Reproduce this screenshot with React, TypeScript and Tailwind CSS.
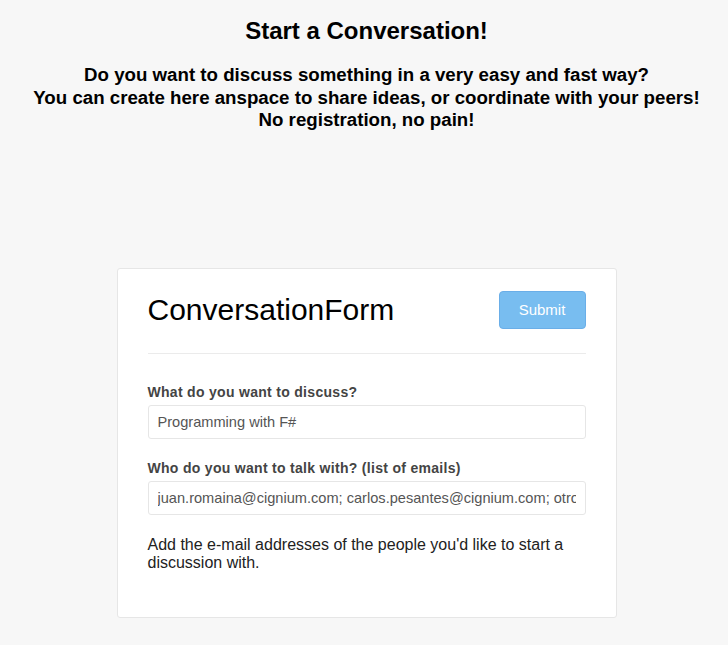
export default function App() {
  return (
    <div
      className="min-h-[645px] bg-[#f7f7f7] pl-[5px] text-black"
      style={{ fontFamily: '"Liberation Sans", Arial, sans-serif' }}
    >
      <div className="pt-[17px] text-center">
        <h2 className="text-[24px] font-bold leading-[28px]">Start a Conversation!</h2>
        <div className="mt-[19px] text-[18.7px] font-bold leading-[22.5px]">
          <p>Do you want to discuss something in a very easy and fast way?</p>
          <p>You can create here anspace to share ideas, or coordinate with your peers!</p>
          <p>No registration, no pain!</p>
        </div>
      </div>

      <div className="mx-auto mt-[136px] w-[500px] rounded-[3px] border border-[#e6e6e6] bg-white px-[30px] pb-[45px] pt-[22px]">
        <div className="flex h-[38px] items-center justify-between">
          <h1 className="text-[30px] font-normal leading-[38px]">ConversationForm</h1>
          <button className="h-[38px] w-[87px] rounded-[4px] border border-[#6aaee8] bg-[#78bdf0] pt-[2px] text-[15px] text-white">
            Submit
          </button>
        </div>
        <div className="mt-[24px] border-t border-[#ebebeb]" />

        <label className="mt-[29px] block text-[14px] font-bold leading-[18px] tracking-[0.3px] text-[#444]">
          What do you want to discuss?
        </label>
        <input
          readOnly
          value="Programming with F#"
          className="mt-[4px] block h-[34px] w-full rounded-[3px] border border-[#e6e6e6] px-[9px] text-[14.6px] text-[#555] outline-none"
        />

        <label className="mt-[20px] block text-[14px] font-bold leading-[18px] tracking-[0.3px] text-[#444]">
          Who do you want to talk with? (list of emails)
        </label>
        <input
          readOnly
          value="juan.romaina@cignium.com; carlos.pesantes@cignium.com; otro@cignium.com"
          className="mt-[4px] block h-[34px] w-full rounded-[3px] border border-[#e6e6e6] px-[9px] text-[14.6px] text-[#555] outline-none"
        />

        <p className="mt-[21px] text-[16px] leading-[18px] text-[#222]">
          Add the e-mail addresses of the people you'd like to start a discussion with.
        </p>
      </div>
    </div>
  );
}
